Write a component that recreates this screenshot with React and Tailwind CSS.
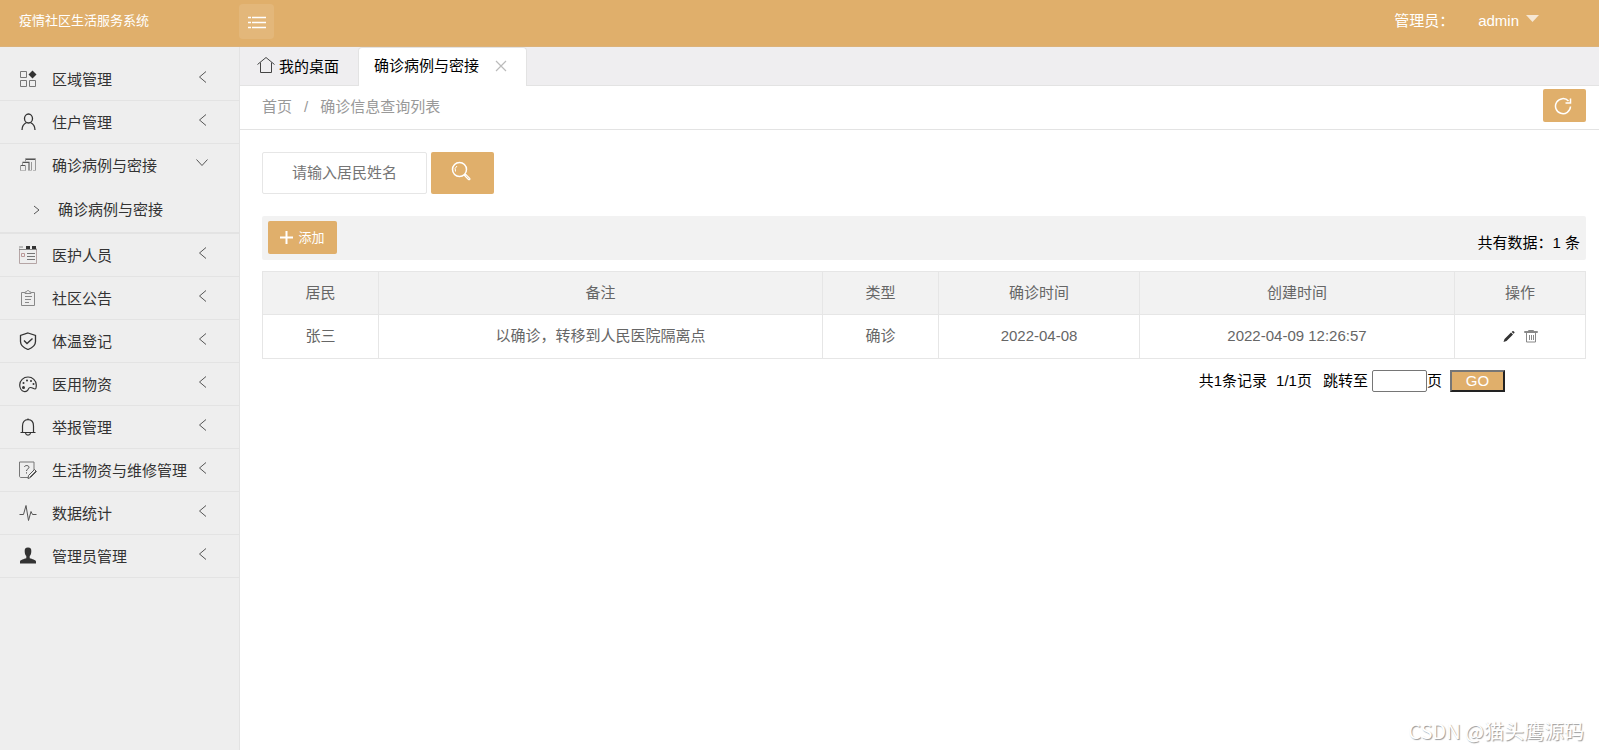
import { useState } from 'react';

const svg = { fill: 'none', stroke: 'currentColor', strokeWidth: 1 };

const icons = {
  area: (
    <>
      <path d="M1.5 1.5h6v6h-6zM1.5 10.5h6v6h-6zM10.5 10.5h6v6h-6z" stroke="#777" />
      <path d="M13.5 0.5l4 4-4 4-4-4z" fill="currentColor" stroke="none" />
    </>
  ),
  user: (
    <>
      <ellipse cx="9.5" cy="5.5" rx="4" ry="4.5" strokeWidth="1.3" />
      <path d="M3 17c0-4 1.5-6 4.5-7.5M11.5 9.5c3 1.5 4.5 3.5 4.5 7.5" strokeWidth="1.3" />
    </>
  ),
  cases: (
    <>
      <path d="M1.500 14.500v-5h5v5zM3.500 9v-3h7v8.500M9.500 14.500V6M6.500 5.500v-3h10v12M12.500 14.500V6" stroke="#999" />
      <path d="M2 9.500h4M4 6.500h6M7 3.500h9" stroke="#555" />
      <path d="M1.500 14.500h5M9 14.500h3M14 14.500h3" stroke="#bbb" />
    </>
  ),
  staff: (
    <>
      <path d="M0.500 2.500v15h17v-15" stroke="#b5a5a5" />
      <path d="M0 1h4M0 3.500h18" stroke="#888" />
      <path d="M2.500 10.500v-3h3v3z" stroke="#b99" />
      <path d="M8 7.500h8M8 10.500h8M8 13.500h8" stroke="#777" />
      <path d="M7 0h4v3H7zM13 0h4v3h-4z" fill="currentColor" stroke="none" />
    </>
  ),
  notice: (
    <path d="M6 3.5H2.5v13h13v-13H12M6 4.5V3h1.5c0-2 3-2 3 0H12v1.500zM6 7.500h7M6 10.500h6M6 13.500h4" stroke="#888" />
  ),
  shield: (
    <>
      <path d="M9 1l7.5 2.5v6c0 4-3.5 6.500-7.500 8-4-1.500-7.500-4-7.500-8v-6z" strokeWidth="1.3" />
      <path d="M5 8.500l3 3 5.500-5" strokeWidth="1.400" />
    </>
  ),
  supplies: (
    <>
      <path d="M5 16.500C2.500 16 0.700 13 0.700 10 0.700 5.500 4.500 2 9 2s8.300 3.500 8.300 8c0 2.500 0 4-1.300 4-1.500 0-2.500-1.500-4.500-1.500-2.500 0-1.500 1.500-3 3-1 .800-2.200 1.300-3.500 1z" strokeWidth="1.200" />
      <circle cx="4.500" cy="12.500" r="1.500" fill="currentColor" stroke="none" />
      <circle cx="4.500" cy="8" r="1" fill="currentColor" stroke="none" />
      <circle cx="8" cy="5.500" r="1" fill="currentColor" stroke="none" />
      <circle cx="12" cy="6" r="1" fill="currentColor" stroke="none" />
      <circle cx="14.500" cy="9" r="1" fill="currentColor" stroke="none" />
    </>
  ),
  bell: (
    <>
      <path d="M1.500 14.500h15M3.500 14V8c0-4 2-6.300 5.500-6.300S14.500 4 14.500 8v6" strokeWidth="1.200" />
      <path d="M6.500 15c.5 2.700 4.500 2.700 5 0M9 0.500v1" strokeWidth="1.200" />
    </>
  ),
  repair: (
    <>
      <path d="M9 16.500H2c-1 0-1.500-.5-1.500-1.500V1H15v8" stroke="#777" />
      <path d="M5.500 6C5.500 4 10 4 10 6.300 10 8 7.500 7.800 7.500 10M7.500 11.300v1.200" stroke="#555" />
      <path d="M9.500 14.500l6-6 2 2-6 6-2.500 1zM11 16l6-6" stroke="#555" />
    </>
  ),
  stats: <path d="M0.500 10.500h4l2.500-9 2.500 15 2.500-9 1.500 3h4" stroke="#555" />,
  admin: (
    <path d="M9 0.500c2.700 0 3.500 1.500 3.300 4-.1 2-.6 3.500-1.600 4.500v2.300c2.500.8 5.800 1.500 6.300 3.200v2H1v-2c.5-1.700 3.800-2.400 6.300-3.200V9c-1-1-1.500-2.500-1.600-4.500C5.500 2 6.300.5 9 .5z" fill="currentColor" stroke="none" />
  ),
};

const menus = [
  { icon: 'area', name: '区域管理' },
  { icon: 'user', name: '住户管理' },
  { icon: 'cases', name: '确诊病例与密接', children: ['确诊病例与密接'] },
  { icon: 'staff', name: '医护人员' },
  { icon: 'notice', name: '社区公告' },
  { icon: 'shield', name: '体温登记' },
  { icon: 'supplies', name: '医用物资' },
  { icon: 'bell', name: '举报管理' },
  { icon: 'repair', name: '生活物资与维修管理' },
  { icon: 'stats', name: '数据统计' },
  { icon: 'admin', name: '管理员管理' },
];

const rows = [
  { name: '张三', remark: '以确诊，转移到人民医院隔离点', type: '确诊', date: '2022-04-08', created: '2022-04-09 12:26:57' },
];

function Header({ onToggle }) {
  return (
    <header className="flex h-[47px] items-start border-b border-[#dcb27a] bg-[#e0af6b] pt-1 text-white">
      <div className="flex h-[33px] w-[239px] shrink-0 items-center pl-[19px] text-[13px]">疫情社区生活服务系统</div>
      <button onClick={onToggle} aria-label="切换菜单" className="flex h-[35px] w-[35px] items-center justify-center rounded bg-white/10">
        <svg {...svg} width="20" height="14" viewBox="0 0 20 14">
          <path d="M1 2.500h3M5 2.500h14M1 7.500h3M5 7.500h14M1 12.500h3M5 12.500h14" strokeWidth="1.300" />
        </svg>
      </button>
      <div className="ml-auto flex h-[33px] items-center pr-[60px]">
        <span>管理员：</span>
        <button className="ml-6 flex items-center gap-[7px]">
          admin
          <svg width="13" height="7" viewBox="0 0 13 7" className="mb-1 text-white/70">
            <path d="M0 0h13L6.500 7z" fill="currentColor" />
          </svg>
        </button>
      </div>
    </header>
  );
}

function Sidebar() {
  const [open, setOpen] = useState('cases');

  return (
    <nav className="w-60 shrink-0 border-r border-[#e3e3e3] bg-[#eeeeee] pt-[11px] text-[#333]">
      <ul>
        {menus.map((menu) => {
          const expanded = open === menu.icon && menu.children;
          return (
            <li key={menu.icon} className={expanded ? 'border-b-2 border-[#e3e3e3]' : 'border-b border-[#e3e3e3]'}>
              <button
                onClick={() => setOpen(expanded ? '' : menu.icon)}
                className="flex h-[42px] w-full items-center pl-[19px] text-left"
              >
                <svg {...svg} width="18" height="18" viewBox="0 0 18 18" className="shrink-0">
                  {icons[menu.icon]}
                </svg>
                <span className="ml-[15px] w-[141px] whitespace-nowrap pt-0.5">{menu.name}</span>
                <svg {...svg} width="18" height="14" viewBox="0 0 18 14" className="mb-1 text-[#555]">
                  {expanded ? <path d="M3.500 3.500l5.500 6 5.500-6" /> : <path d="M13 1.500L6.500 7l6.500 5.500" />}
                </svg>
              </button>
              {expanded && (
                <ul>
                  {menu.children.map((child) => (
                    <li key={child}>
                      <a href="#cases" className="flex h-[46px] items-center pt-0.5 pl-[33px]">
                        <svg {...svg} width="7" height="10" viewBox="0 0 7 10" className="text-[#555]">
                          <path d="M1 1l5 4-5 4" />
                        </svg>
                        <span className="ml-[18px]">{child}</span>
                      </a>
                    </li>
                  ))}
                </ul>
              )}
            </li>
          );
        })}
      </ul>
    </nav>
  );
}

function Tabs() {
  return (
    <div className="flex h-[39px] border-b border-[#e3e3e3] bg-[#efeef0] text-black">
      <button className="flex w-[118px] items-center pl-[17px]">
        <svg {...svg} width="18" height="18" viewBox="0 0 18 18" className="text-[#444]">
          <path d="M0.500 7.500L9 0.500l8.500 7M3.500 5.500v10h11v-10" />
        </svg>
        <span className="ml-1 pt-0.5">我的桌面</span>
      </button>
      <div className="-mb-px flex w-[169px] items-center rounded-t-sm border border-b-0 border-[#e3e3e3] bg-white pb-0.5 pl-[15px]">
        <button>确诊病例与密接</button>
        <button aria-label="关闭" className="ml-4 text-[#bbb]">
          <svg {...svg} width="12" height="12" viewBox="0 0 12 12">
            <path d="M1 1l10 10M11 1L1 11" strokeWidth="1.200" />
          </svg>
        </button>
      </div>
    </div>
  );
}

function CaseTable() {
  return (
    <table className="mt-[11px] w-full table-fixed border-collapse text-center text-[#666]">
      <colgroup>
        <col className="w-[116px]" />
        <col className="w-[444px]" />
        <col className="w-[116px]" />
        <col className="w-[201px]" />
        <col className="w-[315px]" />
        <col className="w-[131px]" />
      </colgroup>
      <thead>
        <tr className="h-[43px] bg-[#f2f2f2]">
          {['居民', '备注', '类型', '确诊时间', '创建时间', '操作'].map((title) => (
            <th key={title} className="border border-[#e6e6e6] font-normal">{title}</th>
          ))}
        </tr>
      </thead>
      <tbody>
        {rows.map((row) => (
          <tr key={row.created} className="h-11">
            <td className="border border-[#e6e6e6] pb-0.5">{row.name}</td>
            <td className="border border-[#e6e6e6] pb-0.5">{row.remark}</td>
            <td className="border border-[#e6e6e6] pb-0.5">{row.type}</td>
            <td className="border border-[#e6e6e6] pb-0.5">{row.date}</td>
            <td className="border border-[#e6e6e6] pb-0.5">{row.created}</td>
            <td className="border border-[#e6e6e6] pb-0.5">
              <div className="flex items-center justify-center gap-2">
                <button aria-label="编辑" className="text-[#333]">
                  <svg width="14" height="14" viewBox="0 0 14 14" fill="currentColor">
                    <path d="M1.500 13l1-3L9 3.500l2 2L4.500 12zM9.700 2.900l1-.9c.6-.5 2.300 1.200 1.800 1.800l-.9 1z" />
                  </svg>
                </button>
                <button aria-label="删除" className="text-[#888]">
                  <svg {...svg} width="14" height="14" viewBox="0 0 14 14">
                    <path d="M0.500 3.500v-1h13v1zM4.500 2V1.500h5V2M2.500 4v9h9V4M5.500 6v5M7.500 6v5M9.500 6v5" />
                  </svg>
                </button>
              </div>
            </td>
          </tr>
        ))}
      </tbody>
    </table>
  );
}

function Pager() {
  return (
    <form onSubmit={(e) => e.preventDefault()} className="mt-[11px] flex h-[22px] items-center justify-end pr-[81px] text-black">
      <span>共1条记录</span>
      <span className="ml-[9px]">1/1页</span>
      <label htmlFor="page" className="ml-[11px]">跳转至</label>
      <input id="page" type="text" className="ml-1 h-[22px] w-[55px] rounded-xs border border-[#767676] bg-white px-1" />
      <span>页</span>
      <button className="ml-2 flex h-[22px] w-[55px] items-center justify-center border-2 border-t-[#767676] border-r-[#222] border-b-[#222] border-l-[#767676] bg-[#e0af6b] pb-0.5 leading-none text-white">
        GO
      </button>
    </form>
  );
}

export default function App() {
  const [showMenu, setShowMenu] = useState(true);
  const [keyword, setKeyword] = useState('');

  return (
    <div className="relative flex min-h-screen flex-col bg-white font-['Liberation_Sans','Noto_Sans_CJK_SC',sans-serif] text-[15px] leading-5">
      <Header onToggle={() => setShowMenu(!showMenu)} />

      <div className="flex flex-1">
        {showMenu && <Sidebar />}

        <main className="min-w-0 flex-1">
          <Tabs />

          {/* Breadcrumb */}
          <div className="flex h-11 items-center justify-between border-b border-[#e3e3e3] pr-[13px] pl-[22px] text-[#999]">
            <div className="flex pb-0.5">
              <a href="#home">首页</a>
              <span className="mx-3">/</span>
              <a href="#cases">确诊信息查询列表</a>
            </div>
            <button aria-label="刷新" className="mb-1 flex h-[33px] w-[43px] items-center rounded-xs bg-[#e0af6b] pl-[11px] text-white">
              <svg {...svg} width="18" height="18" viewBox="0 0 18 18">
                <path d="M16.500 9.500A7.500 7.500 0 1 1 14.500 4M16.500 1.500v4.500h-5" strokeWidth="1.500" />
              </svg>
            </button>
          </div>

          <div className="pt-[22px] pr-[13px] pl-[22px]">
            <form onSubmit={(e) => e.preventDefault()} className="flex gap-1">
              <input
                type="text"
                aria-label="居民姓名"
                placeholder="请输入居民姓名"
                value={keyword}
                onChange={(e) => setKeyword(e.target.value)}
                className="h-[42px] w-[165px] rounded-xs border border-[#e6e6e6] pb-0.5 text-center placeholder:text-[#757575]"
              />
              <button aria-label="搜索" className="flex h-[42px] w-[63px] items-center justify-center rounded-xs bg-[#e0af6b] pr-1 pb-1 text-white">
                <svg {...svg} width="20" height="20" viewBox="0 0 20 20">
                  <circle cx="8.500" cy="8.500" r="7" strokeWidth="1.500" />
                  <path d="M4.500 10.500a4.500 4.500 0 0 1 1.500-5.500" />
                  <path d="M13.500 14.500l1.200-1.200 4 4c.8.8-.5 2-1.200 1.200z" strokeWidth="1.200" />
                </svg>
              </button>
            </form>

            <div className="mt-[22px] flex h-11 items-start justify-between rounded-xs bg-[#f2f2f2] px-[6px] pt-[5px]">
              <button className="flex h-[33px] w-[69px] items-center justify-center gap-[5px] rounded-xs bg-[#e0af6b] text-[13px] text-white">
                <svg {...svg} width="13" height="13" viewBox="0 0 13 13">
                  <path d="M6.500 0v13M0 6.500h13" strokeWidth="2" />
                </svg>
                添加
              </button>
              <span className="pt-3 text-black">共有数据：1 条</span>
            </div>

            <CaseTable />
            <Pager />
          </div>
        </main>
      </div>

      <div className="absolute right-[15px] bottom-[7px] font-['Noto_Sans_CJK_SC',sans-serif] text-xl leading-6 text-white [text-shadow:1px_1px_1px_#999]">
        CSDN @猫头鹰源码
      </div>
    </div>
  );
}
